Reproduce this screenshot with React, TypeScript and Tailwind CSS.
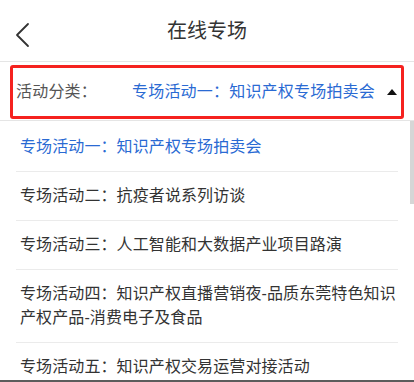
const items = [
  '专场活动一：知识产权专场拍卖会',
  '专场活动二：抗疫者说系列访谈',
  '专场活动三：人工智能和大数据产业项目路演',
  '专场活动四：知识产权直播营销夜-品质东莞特色知识产权产品-消费电子及食品',
  '专场活动五：知识产权交易运营对接活动',
];

const font = "font-['Liberation_Sans','Noto_Sans_CJK_SC',sans-serif]";

export default function App() {
  return (
    <div className={`flex h-[382px] w-[414px] flex-col overflow-hidden bg-white ${font}`}>
      <div className="relative flex h-[62px] shrink-0 items-center justify-center border-b border-[#e5e5e5]">
        <button type="button" className="absolute left-[14px] top-[22px] text-[#333]">
          <svg width="18" height="26" viewBox="0 0 18 26" fill="none">
            <path d="M14 2 L3 13 L14 24" stroke="#333" strokeWidth="1.8" strokeLinecap="round" strokeLinejoin="round" />
          </svg>
        </button>
        <h1 className="text-[20px] leading-none text-[#333]">在线专场</h1>
      </div>

      <div className="shrink-0 px-[10px] pt-[3px]">
        <div className="flex h-[54px] items-center rounded-[3px] border-[3px] border-[#f5221f] pl-[3px] pr-[4px] text-[16px] tracking-[0.2px]">
          <span className="text-[#555]">活动分类：</span>
          <span className="ml-[35px] flex-1 text-[#2a6ad3]">专场活动一：知识产权专场拍卖会</span>
          <svg width="10" height="6" viewBox="0 0 10 6">
            <path d="M0 6 L5 0 L10 6 Z" fill="#111" />
          </svg>
        </div>
      </div>

      <div className="relative mt-[1px] flex-1 overflow-hidden border-t border-[#e5e5e5]">
        <div className="absolute right-0 top-0 h-[83px] w-[4px] bg-[#d6d6d6]" />
        <ul className="mx-[16px] text-[16px] leading-6 tracking-[0.1px]">
          {items.map((t, i) => (
            <li
              key={t}
              className={
                (i === 0 ? 'pt-[14px] text-[#2a6ad3] ' : 'pt-3 text-[#333] ') +
                'border-b border-[#ebebeb] pb-3 pl-[4px]'
              }
            >
              {t}
            </li>
          ))}
        </ul>
      </div>
      <div className="h-[2px] shrink-0 bg-[#5c5c5c]" />
    </div>
  );
}
